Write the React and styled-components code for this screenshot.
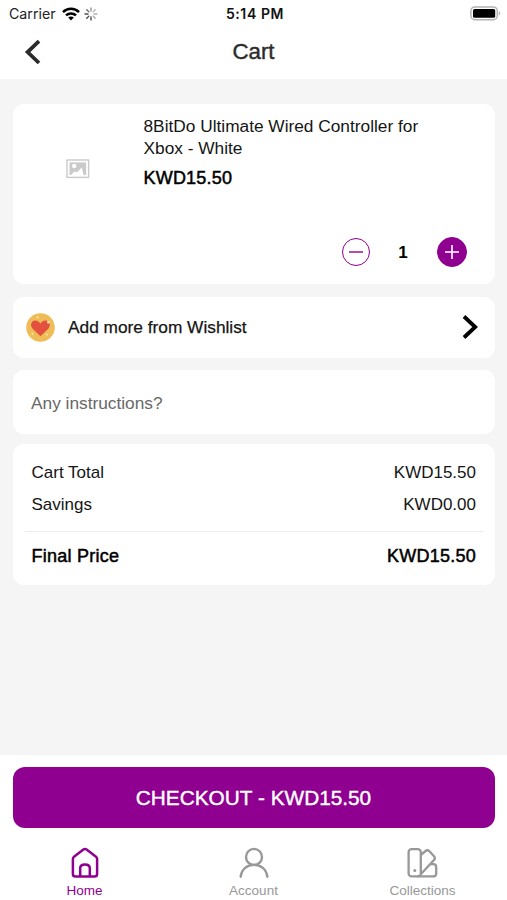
import styled, { createGlobalStyle } from "styled-components";

const PURPLE = "#900090";

const currency = (value) => `KWD${value.toFixed(2)}`;

const item = {
    title: "8BitDo Ultimate Wired Controller for Xbox - White",
    price: 15.5,
    quantity: 1,
};

const tabs = [
    { label: "Home", icon: HomeIcon, active: true },
    { label: "Account", icon: AccountIcon },
    { label: "Collections", icon: CollectionsIcon },
];

export default function App() {
    const total = item.price * item.quantity;

    return (
        <Screen>
            <GlobalStyle />
            <StatusBar>
                <Carrier>
                    Carrier
                    <WifiIcon />
                    <SpinnerIcon />
                </Carrier>
                <Clock>5:14 PM</Clock>
                <BatteryIcon />
            </StatusBar>
            <Header>
                <BackButton aria-label="Back">
                    <svg width="20" height="28" viewBox="0 0 20 28" fill="none" stroke="#2b2b2b" strokeWidth="3.8">
                        <path d="M17 3.2L5.6 14L17 25" />
                    </svg>
                </BackButton>
                <Title>Cart</Title>
            </Header>

            <Content>
                <ProductCard>
                    <Thumbnail>
                        <PlaceholderIcon />
                    </Thumbnail>
                    <ProductInfo>
                        <ProductName>{item.title}</ProductName>
                        <Price>{currency(item.price)}</Price>
                        <Stepper>
                            <RoundButton aria-label="Remove one">
                                <svg width="16" height="16" viewBox="0 0 16 16" stroke="currentColor" strokeWidth="1.4">
                                    <path d="M1 8H15" />
                                </svg>
                            </RoundButton>
                            <Quantity>{item.quantity}</Quantity>
                            <RoundButton $filled aria-label="Add one">
                                <svg width="16" height="16" viewBox="0 0 16 16" stroke="currentColor" strokeWidth="1.6">
                                    <path d="M1 8H15M8 1V15" />
                                </svg>
                            </RoundButton>
                        </Stepper>
                    </ProductInfo>
                </ProductCard>

                <WishlistCard>
                    <HeartIcon />
                    <WishlistLabel>Add more from Wishlist</WishlistLabel>
                    <svg width="18" height="26" viewBox="0 0 18 26" fill="none" stroke="#000" strokeWidth="3.8">
                        <path d="M3 2.5L14.2 13L3 23.5" />
                    </svg>
                </WishlistCard>

                <Instructions placeholder="Any instructions?" />

                <SummaryCard>
                    <SummaryRow>
                        <span>Cart Total</span>
                        <span>{currency(total)}</span>
                    </SummaryRow>
                    <SummaryRow>
                        <span>Savings</span>
                        <span>{currency(0)}</span>
                    </SummaryRow>
                    <Divider />
                    <FinalRow>
                        <span>Final Price</span>
                        <span>{currency(total)}</span>
                    </FinalRow>
                </SummaryCard>
            </Content>

            <Footer>
                <CheckoutButton>CHECKOUT - {currency(total)}</CheckoutButton>
                <TabBar>
                    {tabs.map(({ label, icon: Icon, active }) => (
                        <Tab key={label} $active={active}>
                            <Icon />
                            <span>{label}</span>
                        </Tab>
                    ))}
                </TabBar>
            </Footer>
        </Screen>
    );
}

function WifiIcon() {
    return (
        <svg width="18" height="14" viewBox="0 0 18 14" fill="none" stroke="#000" strokeWidth="2.5">
            <path d="M1 5.2C5.4 .7 12.6 .7 17 5.2" />
            <path d="M4 8.4C6.8 5.7 11.2 5.7 14 8.4" />
            <path d="M9 13.4L6.2 10.6C7.8 9.2 10.2 9.2 11.8 10.6Z" fill="#000" stroke="none" />
        </svg>
    );
}

function SpinnerIcon() {
    const shades = [0.45, 0.3, 0.3, 0.35, 0.75, 0.75, 0.7, 0.6];
    return (
        <svg width="14" height="14" viewBox="0 0 14 14" stroke="#000" strokeWidth="1.3" strokeLinecap="round">
            {shades.map((opacity, i) => (
                <path key={i} d="M7 1V4" opacity={opacity} transform={`rotate(${i * 45} 7 7)`} />
            ))}
        </svg>
    );
}

function BatteryIcon() {
    return (
        <svg width="31" height="15" viewBox="0 0 31 15">
            <rect x=".9" y=".9" width="26.4" height="12.8" rx="4" fill="#fff" stroke="#b3b3b3" strokeWidth="1.5" />
            <rect x="3" y="3" width="22.2" height="8.8" rx="1.6" fill="#000" />
            <path d="M28.8 5V9.6C30.6 8.8 30.6 5.8 28.8 5Z" fill="#b3b3b3" />
        </svg>
    );
}

function PlaceholderIcon() {
    return (
        <svg width="24" height="20" viewBox="0 0 24 20">
            <rect x="1" y="1" width="21.6" height="17.4" fill="#fff" stroke="#cacaca" strokeWidth="1.4" />
            <rect x="3.5" y="3.4" width="16.6" height="12.6" fill="#cacaca" />
            <circle cx="8.2" cy="7" r="2.2" fill="#fff" />
            <path d="M5 16L8.6 12.2L10.8 13.4L15.8 8.6L17.6 16Z" fill="#fff" />
        </svg>
    );
}

function HeartIcon() {
    return (
        <svg width="29" height="29" viewBox="0 0 29 29">
            <circle cx="14.5" cy="14.5" r="14.3" fill="#efbd57" />
            <path
                d="M14.4 23.3L6.6 15.7C3.6 12.6 5.2 7.7 9.2 7.6C11.6 7.5 13.4 9 14.4 10.8C15.4 9 17.2 7.5 19.6 7.6C23.7 7.7 25.2 12.6 22.3 15.7Z"
                fill="#e4503f"
            />
            <g fill="#fae6b4">
                <circle cx="11.6" cy="4.3" r="1" />
                <circle cx="22.3" cy="9.2" r="1.3" />
                <circle cx="6.5" cy="20.8" r="1" />
                <circle cx="20.8" cy="21.5" r="1" />
            </g>
        </svg>
    );
}

function HomeIcon() {
    return (
        <svg width="30" height="32" viewBox="0 0 30 32" fill="none" stroke="currentColor" strokeWidth="2.5" strokeLinejoin="round">
            <path d="M13.4 2.6Q15 1.4 16.6 2.6L26 9.7Q27.1 10.6 27.1 12V27Q27.1 29.6 24.5 29.6H5.5Q2.9 29.6 2.9 27V12Q2.9 10.6 4 9.7Z" />
            <path d="M10.2 29.4V21.3Q10.2 17.5 15 17.5Q19.8 17.5 19.8 21.3V29.4" />
        </svg>
    );
}

function AccountIcon() {
    return (
        <svg width="30" height="32" viewBox="0 0 30 32" fill="none" stroke="currentColor" strokeWidth="2.4" strokeLinecap="round">
            <circle cx="15" cy="9.9" r="8" />
            <path d="M1.7 29.7C2.6 21.8 8.3 17.9 15 17.9C21.7 17.9 27.4 21.8 28.3 29.7" />
        </svg>
    );
}

function CollectionsIcon() {
    return (
        <svg width="31" height="32" viewBox="0 0 31 32" fill="none" stroke="currentColor" strokeWidth="2.3" strokeLinejoin="round">
            <rect x="1.6" y="2.2" width="12.2" height="27.2" rx="3" />
            <path d="M13.8 8L18.6 4Q20.6 2.5 22.4 4.3L27 9.2Q28.7 11 27 12.9L14 27" />
            <path d="M23.2 17.2H26.2Q29.2 17.2 29.2 20.2V26.4Q29.2 29.4 26.2 29.4H10.5" />
            <circle cx="7.8" cy="23.4" r="1.5" fill="currentColor" stroke="none" />
        </svg>
    );
}

const GlobalStyle = createGlobalStyle`
    * {
        box-sizing: border-box;
    }

    body {
        margin: 0;
        font-family: "Liberation Sans", Arial, sans-serif;
        color: #151515;
    }

    svg {
        display: block;
        flex-shrink: 0;
    }

    button {
        padding: 0;
        border: none;
        background: none;
        font-family: inherit;
    }
`;

const Screen = styled.div`
    height: 100vh;
    display: flex;
    flex-direction: column;
    overflow: hidden;
    background: #f5f5f5;
`;

const StatusBar = styled.div`
    height: 28px;
    padding: 0 6px 1px 9px;
    display: grid;
    grid-template-columns: 1fr auto 1fr;
    align-items: center;
    background: #fff;
    font-family: Inter, sans-serif;

    > svg {
        justify-self: end;
    }
`;

const Carrier = styled.div`
    display: flex;
    align-items: center;
    gap: 6px;
    font-size: 14.2px;
    color: #222;

    svg + svg {
        margin-left: -2px;
    }
`;

const Clock = styled.div`
    font-size: 14px;
    font-weight: 600;
    letter-spacing: 0.6px;
    color: #111;
`;

const Header = styled.header`
    height: 50.5px;
    padding: 0 22px;
    display: grid;
    grid-template-columns: 1fr auto 1fr;
    align-items: center;
    background: #fff;
`;

const BackButton = styled.button`
    width: 20px;
    height: 31px;
    margin-bottom: 2px;
`;

const Title = styled.h1`
    margin: 0 0 2px;
    font-size: 22.3px;
    font-weight: 400;
    color: #2b2b2b;
    -webkit-text-stroke: 0.4px currentColor;
`;

const Content = styled.main`
    flex: 1;
    padding: 25.5px 12.5px 0 13px;
    display: flex;
    flex-direction: column;
`;

const Card = styled.section`
    flex-shrink: 0;
    border-radius: 11px;
    background: #fff;
`;

const ProductCard = styled(Card)`
    height: 180px;
    display: flex;
`;

const Thumbnail = styled.div`
    width: 130.5px;
    height: 130px;
    display: flex;
    align-items: center;
    justify-content: center;
`;

const ProductInfo = styled.div`
    flex: 1;
    padding: 12px 28px 17px 0;
    display: flex;
    flex-direction: column;
`;

const ProductName = styled.p`
    width: 300px;
    margin: 0;
    font-size: 17.3px;
    line-height: 21.5px;
`;

const Price = styled.p`
    margin: 8px 0 0;
    font-size: 18px;
    line-height: 22px;
    letter-spacing: 0.2px;
    color: #000;
    -webkit-text-stroke: 0.5px currentColor;
`;

const Stepper = styled.div`
    margin-top: auto;
    display: flex;
    align-items: center;
    justify-content: flex-end;
`;

const RoundButton = styled.button`
    width: ${({ $filled }) => ($filled ? "30px" : "28px")};
    height: ${({ $filled }) => ($filled ? "30px" : "28px")};
    display: flex;
    align-items: center;
    justify-content: center;
    border: 1.4px solid ${PURPLE};
    border-radius: 50%;
    background: ${({ $filled }) => ($filled ? PURPLE : "#fff")};
    color: ${({ $filled }) => ($filled ? "#fff" : PURPLE)};
`;

const Quantity = styled.span`
    width: 67px;
    padding-top: 2px;
    text-align: center;
    font-size: 17px;
    font-weight: 700;
    color: #000;
`;

const WishlistCard = styled(Card)`
    height: 61.5px;
    margin-top: 12.5px;
    padding: 0 16px 0 13px;
    display: flex;
    align-items: center;
`;

const WishlistLabel = styled.span`
    flex: 1;
    margin-left: 13px;
    padding-top: 1px;
    font-size: 17.3px;
    -webkit-text-stroke: 0.25px currentColor;
`;

const Instructions = styled.input`
    height: 64px;
    margin-top: 12px;
    padding: 2px 18px 0;
    border: none;
    border-radius: 11px;
    font-family: inherit;
    font-size: 17.3px;

    &::placeholder {
        color: #686868;
        opacity: 1;
    }
`;

const SummaryCard = styled(Card)`
    height: 141px;
    margin-top: 9.5px;
    padding: 13.5px 0 0;
`;

const SummaryRow = styled.div`
    height: 32px;
    padding: 0 18.5px;
    display: flex;
    align-items: center;
    justify-content: space-between;
    font-size: 17px;
`;

const FinalRow = styled(SummaryRow)`
    font-size: 18px;
    letter-spacing: 0.25px;
    color: #000;
    -webkit-text-stroke: 0.5px currentColor;
`;

const Divider = styled.hr`
    height: 1px;
    margin: 10px 12px 8.5px;
    border: none;
    background: #ededed;
`;

const Footer = styled.footer`
    height: 145px;
    padding-top: 12px;
    background: #fff;
`;

const CheckoutButton = styled.button`
    width: calc(100% - 25px);
    height: 61px;
    margin: 0 12.5px;
    display: block;
    border-radius: 12px;
    background: ${PURPLE};
    color: #fff;
    font-size: 20.8px;
    -webkit-text-stroke: 0.4px currentColor;
`;

const TabBar = styled.nav`
    padding-top: 19px;
    display: grid;
    grid-template-columns: repeat(3, 1fr);
`;

const Tab = styled.div`
    display: flex;
    flex-direction: column;
    align-items: center;
    gap: 4px;
    font-size: 13.5px;
    line-height: 16px;
    color: ${({ $active }) => ($active ? PURPLE : "#989898")};
`;
